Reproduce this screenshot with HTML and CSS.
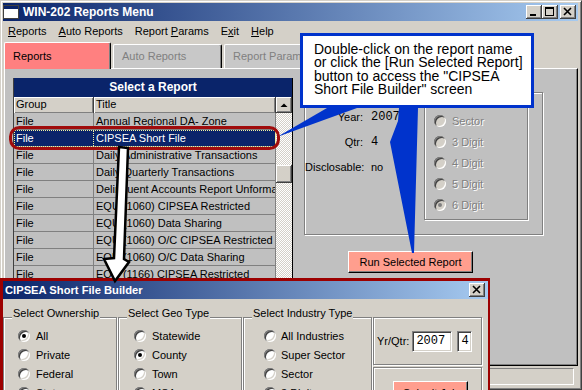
FILE: index.html
```html
<!DOCTYPE html>
<html lang="en">
<head>
  <meta charset="UTF-8" />
  <title>WIN-202 Reports Menu</title>
  <link rel="stylesheet" href="styles.css">
</head>
<body>
  <div class="window">
    <div class="titlebar">
      <svg class="app-icon" width="16" height="14" viewBox="0 0 16 14">
        <rect x="0.5" y="0.5" width="15" height="13" fill="#fff" stroke="#404040"/>
        <rect x="1" y="1" width="14" height="3" fill="#0a246a"/>
      </svg>
      <span>WIN-202 Reports Menu</span>
      <div class="caption-buttons">
        <button class="cap-btn"><svg width="16" height="14" viewBox="0 0 16 14"><rect x="4" y="9" width="6" height="2" fill="#000"/></svg></button>
        <button class="cap-btn"><svg width="16" height="14" viewBox="0 0 16 14"><rect x="3.5" y="2.5" width="8" height="8" fill="none" stroke="#000"/><rect x="3" y="2" width="9" height="2" fill="#000"/></svg></button>
        <button class="cap-btn close"><svg width="16" height="14" viewBox="0 0 16 14"><path d="M4 3l7 7M11 3l-7 7" stroke="#000" stroke-width="1.6"/></svg></button>
      </div>
    </div>

    <div class="menubar">
      <span><u>R</u>eports</span>
      <span><u>A</u>uto Reports</span>
      <span>Report <u>P</u>arams</span>
      <span>E<u>x</u>it</span>
      <span><u>H</u>elp</span>
    </div>

    <div class="tabs">
      <div class="tab active">Reports</div>
      <div class="tab">Auto Reports</div>
      <div class="tab">Report Params</div>
    </div>

    <div class="tab-page">
      <div class="report-list">
        <div class="list-title">Select a Report</div>
        <div class="list-body">
          <div class="grid">
            <div class="row head"><div class="c-group">Group</div><div class="c-title">Title</div></div>
            <div class="row"><div class="c-group">File</div><div class="c-title">Annual Regional DA- Zone</div></div>
            <div class="row sel"><div class="c-group">File</div><div class="c-title">CIPSEA Short File</div></div>
            <div class="row"><div class="c-group">File</div><div class="c-title">Daily Administrative Transactions</div></div>
            <div class="row"><div class="c-group">File</div><div class="c-title">Daily Quarterly Transactions</div></div>
            <div class="row"><div class="c-group">File</div><div class="c-title">Delinquent Accounts Report Unformatted</div></div>
            <div class="row"><div class="c-group">File</div><div class="c-title">EQU (1060) CIPSEA Restricted</div></div>
            <div class="row"><div class="c-group">File</div><div class="c-title">EQU (1060) Data Sharing</div></div>
            <div class="row"><div class="c-group">File</div><div class="c-title">EQU (1060) O/C CIPSEA Restricted</div></div>
            <div class="row"><div class="c-group">File</div><div class="c-title">EQU (1060) O/C Data Sharing</div></div>
            <div class="row"><div class="c-group">File</div><div class="c-title">EQU (1166) CIPSEA Restricted</div></div>
            <div class="row"><div class="c-group">File</div><div class="c-title">EQU (1166) Data Sharing</div></div>
          </div>
          <div class="scrollbar">
            <div class="sb-btn"><svg width="14" height="14" viewBox="0 0 14 14"><path d="M3.5 9h7L7 5.5z" fill="#000"/></svg></div>
            <div class="sb-track"><div class="sb-thumb"></div></div>
          </div>
        </div>
      </div>

      <div class="details">
        <div class="group params-box">
          <div class="info">
            <span class="lbl">Year:</span><span class="mono">2007</span>
            <span class="lbl">Qtr:</span><span class="mono">4</span>
            <span class="lbl">Disclosable:</span><span>no</span>
          </div>
          <div class="group level-box">
            <div class="radio off"><span class="radio-dot"></span>Sector</div>
            <div class="radio off"><span class="radio-dot"></span>3 Digit</div>
            <div class="radio off"><span class="radio-dot"></span>4 Digit</div>
            <div class="radio off"><span class="radio-dot"></span>5 Digit</div>
            <div class="radio off on"><span class="radio-dot"></span>6 Digit</div>
          </div>
        </div>
        <button class="run-btn">Run Selected Report</button>
      </div>
    </div>

    <div class="statusbar"></div>
  </div>

  <div class="dialog">
    <div class="dlg-title">
      <span>CIPSEA Short File Builder</span>
      <button class="cap-btn"><svg width="16" height="14" viewBox="0 0 16 14"><path d="M4 3l7 7M11 3l-7 7" stroke="#000" stroke-width="1.6"/></svg></button>
    </div>
    <div class="dlg-body">
      <div class="group opt-box own">
        <div class="group-label">Select Ownership</div>
        <div class="radio on"><span class="radio-dot"></span>All</div>
        <div class="radio"><span class="radio-dot"></span>Private</div>
        <div class="radio"><span class="radio-dot"></span>Federal</div>
        <div class="radio"><span class="radio-dot"></span>State</div>
      </div>
      <div class="group opt-box geo">
        <div class="group-label">Select Geo Type</div>
        <div class="radio"><span class="radio-dot"></span>Statewide</div>
        <div class="radio on"><span class="radio-dot"></span>County</div>
        <div class="radio"><span class="radio-dot"></span>Town</div>
        <div class="radio"><span class="radio-dot"></span>MSA</div>
      </div>
      <div class="group opt-box ind">
        <div class="group-label">Select Industry Type</div>
        <div class="radio"><span class="radio-dot"></span>All Industries</div>
        <div class="radio"><span class="radio-dot"></span>Super Sector</div>
        <div class="radio"><span class="radio-dot"></span>Sector</div>
        <div class="radio"><span class="radio-dot"></span>3 Digit</div>
      </div>
      <div class="dlg-side">
        <div class="group yrqtr">
          <span>Yr/Qtr:</span>
          <span class="field year">2007</span>
          <span class="field qtr">4</span>
        </div>
        <div class="group submit-box">
          <button class="submit-btn">Submit Job</button>
        </div>
      </div>
    </div>
  </div>

  <div class="callout">
    Double-click on the report name<br>
    or click the [Run Selected Report]<br>
    button to access the "CIPSEA<br>
    Short File Builder" screen
  </div>

  <svg class="marks" width="582" height="390" viewBox="0 0 582 390">
    <polygon points="277,137 327,108 357,108" fill="#0033cc"/>
    <polygon points="399,108 418,108 414,253 412,253 390,142 398,121" fill="#0033cc"/>
    <rect x="10.5" y="127.5" width="268" height="21" rx="9" fill="none" stroke="#a00c0c" stroke-width="3"/>
    <polygon points="119,147 128,148 124,259 129,262 115,281 104,259 114,258" fill="#fff" stroke="#000" stroke-width="2.5" stroke-linejoin="miter"/>
  </svg>
</body>
</html>
```

FILE: styles.css
```css
* {
  box-sizing: border-box;
}

body {
  margin: 0;
  width: 582px;
  height: 390px;
  overflow: hidden;
  position: relative;
  background-color: #d4d0c8;
  font-family: "Liberation Sans", Arial, sans-serif;
  font-size: 11px;
  color: #000;
}

button {
  font-family: inherit;
  font-size: 11px;
  padding: 0;
  color: #000;
}

.window {
  height: 390px;
  border: 1px solid;
  border-color: #d4d0c8 #404040 #404040 #d4d0c8;
  box-shadow: inset 1px 1px #fff, inset -1px -1px #808080;
  padding: 2px 3px 0 2px;
}

/* title bars */

.titlebar {
  height: 18px;
  display: flex;
  align-items: center;
  background: linear-gradient(to right, #0a246a, #a6caf0);
  color: #fff;
  font-weight: bold;
  font-size: 12px;
}

.app-icon {
  display: block;
  margin-right: 4px;
}

.caption-buttons {
  margin-left: auto;
  display: flex;
  padding-right: 2px;
}

.cap-btn {
  width: 16px;
  height: 14px;
  border: none;
  background-color: #d4d0c8;
  box-shadow: inset -1px -1px #404040, inset 1px 1px #fff, inset -2px -2px #808080;
  display: block;
}

.cap-btn svg {
  display: block;
}

.cap-btn.close {
  margin-left: 2px;
}

/* menu + tabs */

.menubar {
  height: 20px;
  display: flex;
  align-items: center;
  gap: 12px;
  padding-left: 5px;
}

.tabs {
  height: 27px;
  display: flex;
  align-items: flex-end;
  gap: 2px;
  padding-left: 1px;
}

.tab {
  width: 109px;
  height: 24px;
  padding: 5px 0 0 8px;
  background-color: #c8c8c8;
  color: #808080;
  border: 1px solid;
  border-color: #fff #000 transparent #fff;
  border-bottom: none;
  box-shadow: inset -1px 0 #808080;
  border-radius: 2px 2px 0 0;
  line-height: 13px;
}

.tab.active {
  width: 107px;
  height: 27px;
  margin-bottom: -1px;
  padding-top: 7px;
  position: relative;
  z-index: 1;
  background-color: #ff8080;
  color: #000;
}

.tab-page {
  height: 298px;
  margin-left: 1px;
  display: flex;
  padding: 9px 0 0 8px;
  background-color: #c0c0c0;
  border: 1px solid;
  border-color: #fff #000 #000 #fff;
  box-shadow: inset -1px -1px #808080;
}

.statusbar {
  height: 17px;
  margin: 2px 4px 0 1px;
  border: 1px solid;
  border-color: #808080 #fff #fff #808080;
}

/* report list */

.report-list {
  width: 280px;
  height: 287px;
  flex: none;
  display: flex;
  flex-direction: column;
  border-left: 1px solid #404040;
  border-right: 1px solid #000;
}

.list-title {
  height: 19px;
  line-height: 19px;
  text-align: center;
  background-color: #0a246a;
  color: #fff;
  font-weight: bold;
  font-size: 12px;
}

.list-body {
  flex: 1;
  display: flex;
  min-height: 0;
}

.grid {
  flex: 1;
  overflow: hidden;
}

.row {
  height: 17px;
  display: flex;
  line-height: 16px;
  white-space: nowrap;
  border-bottom: 1px solid #808080;
}

.row > div {
  padding-left: 2px;
  border-right: 1px solid #808080;
  overflow: hidden;
}

.c-group {
  width: 80px;
  flex: none;
}

.c-title {
  flex: 1;
}

.row.head {
  height: 16px;
  line-height: 15px;
  border-bottom: none;
  background-color: #d4d0c8;
}

.row.head > div {
  border-right: 1px solid #404040;
  box-shadow: inset 1px 1px #fff, inset -1px -1px #808080;
}

.row.sel {
  background-color: #0a246a;
  color: #fff;
  outline: 1px dotted #f0f0a0;
  outline-offset: -1px;
}

.row.sel > div {
  border-right: 1px dotted #f0f0a0;
}

.scrollbar {
  width: 16px;
  flex: none;
  display: flex;
  flex-direction: column;
}

.sb-btn,
.sb-thumb {
  height: 16px;
  background-color: #d4d0c8;
  box-shadow: inset -1px -1px #404040, inset 1px 1px #fff, inset -2px -2px #808080;
}

.sb-btn svg {
  display: block;
  margin: 1px;
}

.sb-track {
  flex: 1;
  background: repeating-conic-gradient(#fff 0 25%, #d4d0c8 0 50%) 0 0 / 2px 2px;
}

.sb-thumb {
  height: 18px;
  margin-top: 52px;
}

/* etched group boxes */

.group {
  border: 1px solid #808080;
  box-shadow: inset 1px 1px #fff, 1px 1px #fff;
}

.group-label {
  width: fit-content;
  margin: -11px 0 0 8px;
  padding: 0 1px;
  line-height: 13px;
  background-color: #d4d0c8;
}

.details {
  margin: 14px 0 0 11px;
}

.params-box {
  width: 239px;
  height: 143px;
  display: flex;
  align-items: flex-start;
}

.info {
  width: 119px;
  flex: none;
  display: grid;
  grid-template-columns: 58px auto;
  grid-auto-rows: 14px;
  column-gap: 8px;
  row-gap: 11px;
  padding-top: 17px;
  line-height: 14px;
}

.lbl {
  text-align: right;
}

.mono {
  font-family: "Liberation Mono", "Courier New", monospace;
  font-size: 12px;
}

.level-box {
  width: 104px;
  height: 122px;
  margin-top: 5px;
  padding: 11px 0 0 9px;
}

.radio {
  height: 21px;
  display: flex;
  align-items: center;
  gap: 6px;
  white-space: nowrap;
}

.radio-dot {
  width: 12px;
  height: 12px;
  flex: none;
  display: grid;
  place-items: center;
  border-radius: 50%;
  background-color: #fff;
  box-shadow: inset 1px 1px #808080, inset -1px -1px #fff, inset 2px 2px #404040, inset -2px -2px #d4d0c8;
}

.radio.on .radio-dot::after {
  content: "";
  width: 4px;
  height: 4px;
  border-radius: 50%;
  background-color: #000;
}

.radio.off {
  color: #808080;
  text-shadow: 1px 1px 0 #fff;
}

.radio.off .radio-dot {
  background-color: #d4d0c8;
}

.radio.off.on .radio-dot::after {
  background-color: #808080;
}

.run-btn,
.submit-btn {
  display: block;
  background-color: #ff9e8e;
  border: 1px solid;
  border-color: #fff #000 #000 #fff;
  box-shadow: inset -1px -1px #808080;
}

.run-btn {
  width: 125px;
  height: 22px;
  margin: 16px 0 0 44px;
}

/* builder dialog */

.dialog {
  position: absolute;
  left: 0;
  top: 278px;
  width: 490px;
  height: 130px;
  background-color: #d4d0c8;
  border: 3px solid #9c0000;
  border-right-width: 2px;
}

.dlg-title {
  height: 18px;
  display: flex;
  align-items: center;
  justify-content: space-between;
  padding: 0 3px 0 2px;
  background: linear-gradient(to right, #0a246a, #a6caf0);
  color: #fff;
  font-weight: bold;
  font-size: 11.2px;
}

.dlg-body {
  display: flex;
  gap: 1px;
  padding-top: 18px;
}

.opt-box {
  height: 90px;
  flex: none;
}

.opt-box .group-label {
  margin-bottom: 6px;
}

.opt-box .radio {
  height: 19px;
}

.own {
  width: 114px;
  padding-left: 14px;
}

.own .group-label {
  margin-left: -6px;
}

.geo {
  width: 124px;
  padding-left: 15px;
}

.geo .group-label {
  margin-left: -7px;
}

.ind {
  width: 129px;
  padding-left: 20px;
}

.ind .group-label {
  margin-left: -12px;
}

.ind .radio {
  gap: 5px;
}

.dlg-side {
  width: 109px;
  display: flex;
  flex-direction: column;
  gap: 2px;
}

.yrqtr {
  height: 48px;
  display: flex;
  align-items: center;
  gap: 3px;
  padding-left: 3px;
}

.field {
  height: 21px;
  padding-left: 3px;
  line-height: 19px;
  background-color: #fff;
  font-family: "Liberation Mono", "Courier New", monospace;
  font-size: 12px;
  border: 1px solid;
  border-color: #808080 #fff #fff #808080;
  box-shadow: inset 1px 1px #404040, inset -1px -1px #d4d0c8;
}

.field.year {
  width: 40px;
}

.field.qtr {
  width: 15px;
  margin-left: 2px;
}

.submit-box {
  height: 40px;
  padding: 13px 0 0 19px;
}

.submit-btn {
  width: 75px;
  height: 24px;
}

/* annotations over the screenshot */

.callout {
  position: absolute;
  left: 300px;
  top: 33px;
  width: 234px;
  height: 75px;
  padding: 7px 0 0 11px;
  background-color: #fff;
  border: 3px solid #0033cc;
  font-size: 14px;
  line-height: 13.4px;
  white-space: nowrap;
}

.marks {
  position: absolute;
  left: 0;
  top: 0;
  pointer-events: none;
}
```
